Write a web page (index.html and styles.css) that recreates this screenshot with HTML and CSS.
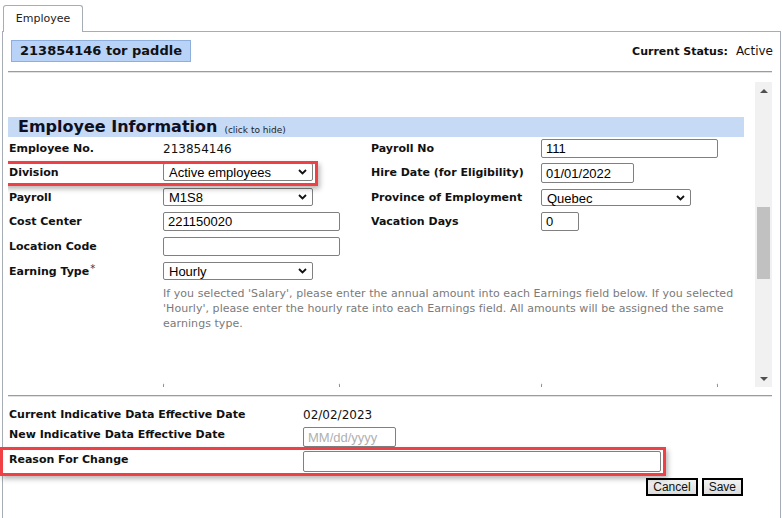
FILE: index.html
```html
<!DOCTYPE html>
<html>
<head>
<meta charset="utf-8">
<link rel="stylesheet" href="styles.css">
</head>
<body>
<div class="tabbar">
  <div class="tab">Employee</div>
</div>
<div class="panel">
  <div class="header">
    <div class="namebox">213854146 tor paddle</div>
    <div class="status"><b>Current Status:</b><span class="status-val">Active</span></div>
  </div>
  <div class="rule"></div>

  <div class="scrollwrap">
    <div class="scrollcontent">
      <div class="spacer-top"></div>
      <div class="sechead"><span class="sectitle">Employee Information</span><span class="sechint">(click to hide)</span></div>

      <div class="row s">
        <div class="lbl">Employee No.</div>
        <div class="val">213854146</div>
        <div class="lbl">Payroll No</div>
        <div class="fld"><div class="inp w177">111</div></div>
      </div>
      <div class="row">
        <div class="lbl hl-anchor">Division<div class="highlight hl-div"></div></div>
        <div class="fld"><div class="sel w150"><span>Active employees</span><svg class="chev" width="9" height="6" viewBox="0 0 9 6"><path d="M1 1 L4.5 4.5 L8 1" fill="none" stroke="#111" stroke-width="1.8"/></svg></div></div>
        <div class="lbl">Hire Date (for Eligibility)</div>
        <div class="fld"><div class="inp w93 h20">01/01/2022</div></div>
      </div>
      <div class="row s">
        <div class="lbl">Payroll</div>
        <div class="fld"><div class="sel w150"><span>M1S8</span><svg class="chev" width="9" height="6" viewBox="0 0 9 6"><path d="M1 1 L4.5 4.5 L8 1" fill="none" stroke="#111" stroke-width="1.8"/></svg></div></div>
        <div class="lbl">Province of Employment</div>
        <div class="fld"><div class="sel w150 p17"><span>Quebec</span><svg class="chev" width="9" height="6" viewBox="0 0 9 6"><path d="M1 1 L4.5 4.5 L8 1" fill="none" stroke="#111" stroke-width="1.8"/></svg></div></div>
      </div>
      <div class="row">
        <div class="lbl">Cost Center</div>
        <div class="fld"><div class="inp w177">221150020</div></div>
        <div class="lbl">Vacation Days</div>
        <div class="fld"><div class="inp w38">0</div></div>
      </div>
      <div class="row">
        <div class="lbl">Location Code</div>
        <div class="fld"><div class="inp w177"></div></div>
        <div class="lbl"></div>
        <div class="fld"></div>
      </div>
      <div class="row s">
        <div class="lbl">Earning Type<span class="req">*</span></div>
        <div class="fld"><div class="sel w150"><span>Hourly</span><svg class="chev" width="9" height="6" viewBox="0 0 9 6"><path d="M1 1 L4.5 4.5 L8 1" fill="none" stroke="#111" stroke-width="1.8"/></svg></div></div>
        <div class="lbl"></div>
        <div class="fld"></div>
      </div>
      <div class="helprow">
        <div class="help">If you selected 'Salary', please enter the annual amount into each Earnings field below. If you selected 'Hourly', please enter the hourly rate into each Earnings field. All amounts will be assigned the same earnings type.</div>
      </div>
      <div class="cutrow">
        <div class="cutcell first"><div class="inp w177 cut"></div></div>
        <div class="cutcell"><div class="inp w177 cut"></div></div>
      </div>
    </div>
    <div class="scrollbar">
      <div class="arrow up"></div>
      <div class="track"><div class="thumb"></div></div>
      <div class="arrow down"></div>
    </div>
  </div>

  <div class="rule rule2"></div>

  <div class="effsec">
    <div class="irow ra">
      <div class="ilbl">Current Indicative Data Effective Date</div>
      <div class="ival">02/02/2023</div>
    </div>
    <div class="irow rb">
      <div class="ilbl">New Indicative Data Effective Date</div>
      <div class="inp w93 h20 ph">MM/dd/yyyy</div>
    </div>
    <div class="irow rc">
      <div class="ilbl">Reason For Change</div>
      <div class="inp w358 h21"></div>
      <div class="highlight hl-reason"></div>
    </div>
    <div class="btnrow">
      <div class="btn">Cancel</div>
      <div class="btn">Save</div>
    </div>
  </div>
</div>
</body>
</html>
```

FILE: styles.css
```css
* { box-sizing: border-box; }
html, body { margin: 0; padding: 0; background: #fff; }
body {
  font-family: "DejaVu Sans", Verdana, sans-serif;
  color: #111;
  width: 782px;
  height: 518px;
  overflow: hidden;
}

.tabbar {
  height: 31px;
  padding-top: 5px;
  padding-left: 3px;
  display: flex;
  align-items: flex-end;
}
.tab {
  position: relative;
  z-index: 2;
  width: 80px;
  height: 27px;
  margin-bottom: -1px;
  border: 1px solid #a6adb5;
  border-bottom: none;
  border-radius: 3px 3px 0 0;
  background: #fff;
  font-size: 11px;
  color: #222;
  display: flex;
  align-items: center;
  justify-content: center;
  padding-bottom: 1px;
}

.panel {
  margin: 0 1px 0 2px;
  border: 1px solid #a6adb5;
  border-bottom: none;
  height: 487px;
  padding: 0 8px 0 5px;
}

.header {
  display: flex;
  justify-content: space-between;
  padding: 8px 0 0 3px;
  height: 39px;
  align-items: flex-start;
}
.namebox {
  width: 180px;
  height: 22px;
  background: #b8d3f7;
  border: 1px solid #8eaedb;
  font-weight: bold;
  font-size: 13px;
  color: #111;
  display: flex;
  align-items: center;
  justify-content: center;
  padding-bottom: 1px;
}
.status {
  font-size: 11px;
  padding-top: 4px;
  margin-right: -1px;
}
.status b { font-weight: bold; }
.status-val { font-size: 12px; margin-left: 8px; }

.rule {
  height: 2px;
  border-top: 1px solid #9c9c9c;
  border-bottom: 1px solid #e2e2e2;
}

.scrollwrap {
  margin-top: 9px;
  height: 305px;
  display: flex;
}
.scrollcontent {
  flex: 1;
  overflow: hidden;
  padding-right: 11px;
}
.spacer-top { height: 35px; }
.sechead {
  height: 20px;
  background: #c6daf6;
  display: flex;
  align-items: flex-end;
  padding-left: 10px;
}
.sectitle {
  font-weight: bold;
  font-size: 16px;
  color: #0f0f1f;
  line-height: 20px;
}
.sechint {
  font-size: 9px;
  margin-left: 7px;
  line-height: 14px;
  color: #222;
}

.row {
  display: grid;
  grid-template-columns: 155px 207px 171px 1fr;
  height: 25px;
  align-items: start;
}
.row.s { height: 24px; }
.lbl {
  font-weight: bold;
  font-size: 11px;
  line-height: 14px;
  padding-top: 5px;
  padding-left: 1px;
  color: #111;
}
.hl-anchor { position: relative; }
.val {
  font-size: 12px;
  line-height: 14px;
  padding-top: 5px;
}
.fld { padding-top: 2px; }
.req {
  font-weight: normal;
  font-size: 10px;
  line-height: 0;
  position: relative;
  top: -3px;
  color: #334;
  margin-left: 1px;
}

.inp {
  height: 19px;
  border: 1px solid #808080;
  border-radius: 2px;
  font-family: "Liberation Sans", Arial, sans-serif;
  font-size: 13px;
  color: #000;
  padding: 0 4px;
  display: flex;
  align-items: center;
  background: #fff;
}
.inp.h20 { height: 20px; }
.inp.h21 { height: 21px; }
.w177 { width: 177px; }
.w150 { width: 150px; }
.w93 { width: 93px; }
.w38 { width: 38px; }
.w358 { width: 358px; }
.ph { color: #b0b0b0; }

.sel {
  height: 18px;
  border: 1px solid #808080;
  border-radius: 2px;
  font-family: "Liberation Sans", Arial, sans-serif;
  font-size: 13px;
  color: #000;
  padding: 0 5px 0 5px;
  display: flex;
  align-items: center;
  justify-content: space-between;
  background: #fff;
}
.sel span { padding-top: 1px; }
.sel.p17 { height: 17px; margin-top: 1px; }
.chev { flex: none; }

.helprow {
  padding: 2px 0 0 155px;
  height: 99px;
}
.help {
  font-size: 11px;
  letter-spacing: 0.05px;
  line-height: 15px;
  color: #7a7a7a;
  width: 585px;
}
.cutrow {
  display: flex;
  padding-left: 155px;
}
.cutcell { flex: none; width: 177px; }
.cutcell.first { width: 378px; }
.cut { border-top-color: transparent; height: 8px; border-color: transparent #909090; }

.scrollbar {
  width: 17px;
  background: #f1f1f1;
  display: flex;
  flex-direction: column;
  align-items: center;
}
.arrow {
  height: 17px;
  display: flex;
  align-items: center;
  justify-content: center;
  width: 100%;
}
.arrow::before {
  content: "";
  border-left: 4px solid transparent;
  border-right: 4px solid transparent;
}
.arrow.up::before { border-bottom: 4px solid #505050; }
.arrow.down::before { border-top: 4px solid #505050; }
.track {
  flex: 1;
  width: 100%;
  padding: 0 2px;
}
.thumb {
  margin-top: 108px;
  height: 72px;
  background: #c1c1c1;
}

.rule2 { margin-top: 8px; }

.effsec { padding-top: 7px; }
.irow {
  display: flex;
  align-items: flex-start;
  height: 24px;
  position: relative;
}
.irow.ra { height: 21px; }
.irow.rb { height: 23px; }
.irow .inp { margin-top: 2px; }
.irow.rc .inp { margin-top: 3px; }
.ilbl {
  width: 295px;
  font-weight: bold;
  font-size: 11px;
  line-height: 14px;
  padding-top: 4px;
  padding-left: 1px;
}
.irow.rb .ilbl { padding-top: 3px; }
.irow.rc .ilbl { padding-top: 5px; }
.ival { font-size: 12px; line-height: 14px; padding-top: 4px; }

.highlight {
  position: absolute;
  border: 3px solid #ef4046;
  box-shadow: 2px 3px 5px rgba(0,0,0,0.28);
  pointer-events: none;
}
.hl-div {
  left: -5px;
  top: 0;
  width: 315px;
  height: 25px;
}
.hl-reason {
  left: -8px;
  top: -1px;
  width: 666px;
  height: 29px;
}

.btnrow {
  display: flex;
  justify-content: flex-end;
  gap: 4px;
  margin-top: 6px;
  padding-right: 29px;
}
.btn {
  height: 18px;
  border: 2px solid #000;
  background: linear-gradient(#f2f2f2, #dcdcdc);
  font-family: "Liberation Sans", Arial, sans-serif;
  font-size: 12px;
  color: #111;
  padding: 0 5px;
  display: flex;
  align-items: center;
}
```
